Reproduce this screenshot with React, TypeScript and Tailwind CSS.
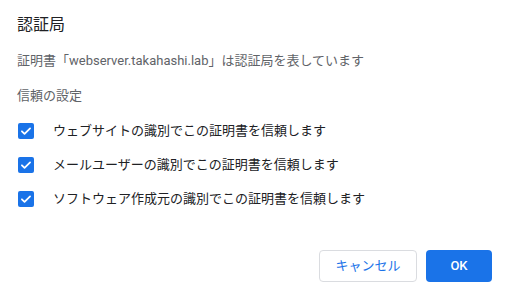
export default function App() {
  const items = [
    'ウェブサイトの識別でこの証明書を信頼します',
    'メールユーザーの識別でこの証明書を信頼します',
    'ソフトウェア作成元の識別でこの証明書を信頼します',
  ]

  return (
    <div className="w-[509px] h-[295px] bg-white flex flex-col px-[17px] pt-[13px] font-['Roboto','Noto_Sans_CJK_JP',sans-serif]">
      <h1 className="text-[16px] leading-[24px] text-[#202124]">認証局</h1>
      <p className="mt-[15px] text-[13px] leading-[18px] text-[#5f6368]">
        証明書「webserver.takahashi.lab」は認証局を表しています
      </p>
      <p className="mt-[17px] text-[13px] leading-[18px] text-[#5f6368]">信頼の設定</p>
      <div className="mt-[17px] flex flex-col gap-[16px]">
        {items.map((label) => (
          <div key={label} className="flex items-center h-[18px]">
            <span className="w-[16px] h-[16px] ml-[1px] rounded-[2px] bg-[#1a73e8] flex items-center justify-center">
              <svg viewBox="0 0 24 24" className="w-[14px] h-[14px]" fill="none" stroke="white" strokeWidth={3} strokeLinecap="round" strokeLinejoin="round">
                <path d="M5 12.5l4.5 4.5L19 7.5" />
              </svg>
            </span>
            <span className="ml-[19px] text-[13px] text-[#202124]">{label}</span>
          </div>
        ))}
      </div>
      <div className="flex-1" />
      <div className="flex justify-end gap-[9px] pb-[13px]">
        <button className="w-[98px] h-[32px] rounded-[4px] border border-[#dadce0] bg-white text-[13px] text-[#1a73e8]">
          キャンセル
        </button>
        <button className="w-[66px] h-[32px] rounded-[4px] bg-[#1a73e8] text-[13px] font-medium text-white">
          OK
        </button>
      </div>
    </div>
  )
}
